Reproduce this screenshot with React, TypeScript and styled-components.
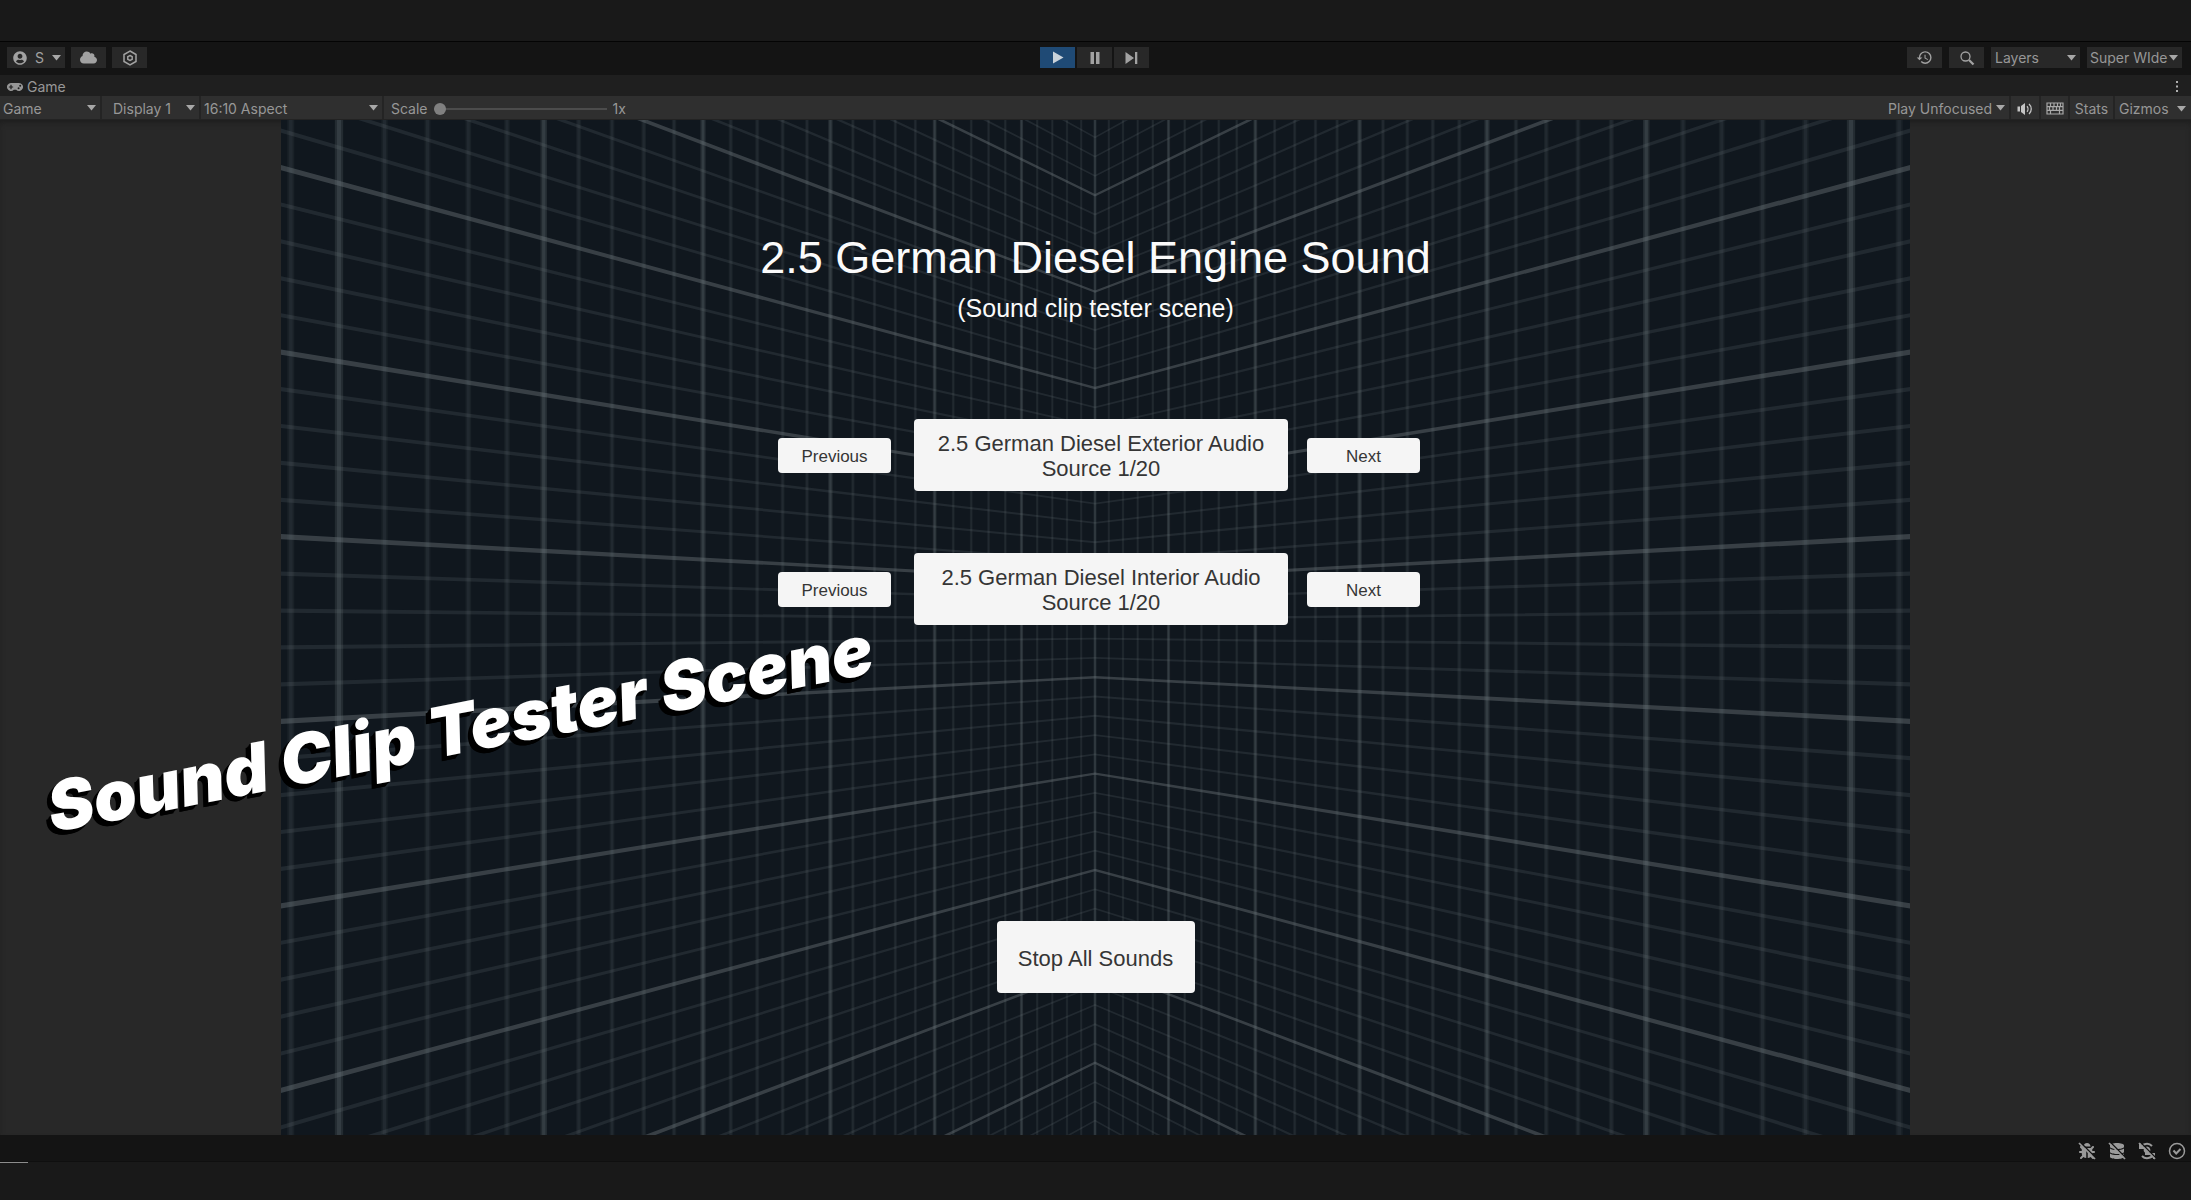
import React from 'react';
import styled, { createGlobalStyle } from 'styled-components';
import { FaBug, FaCloud, FaDatabase, FaGamepad, FaUserCircle } from 'react-icons/fa';
import { MdHistory } from 'react-icons/md';

const UI_FONT = 'Inter, "Liberation Sans", sans-serif';
const SCENE_FONT = '"Liberation Sans", Arial, sans-serif';

const GlobalStyle = createGlobalStyle`
  *, *::before, *::after { box-sizing: border-box; }
  body { margin: 0; background: #191919; }
  button, select, input { font: inherit; color: inherit; margin: 0; border: 0; border-radius: 0; padding: 0; }
`;

const Editor = styled.div`
  display: flex;
  flex-direction: column;
  min-height: 100vh;
  font: 14px/20px ${UI_FONT};
  color: #979797;
  background: #191919;
  overflow: hidden;
`;

const TitleStrip = styled.header`
  height: 42px;
  border-bottom: 1px solid #040404;
`;

const MainToolbar = styled.nav`
  display: grid;
  grid-template-columns: 1fr auto 1fr;
  align-items: center;
  height: 33px;
  padding: 0 9px 2px 7px;
  background: #141414;
`;

const Group = styled.div<{ $gap: number; $end?: boolean }>`
  display: flex;
  align-items: center;
  gap: ${(p) => p.$gap}px;
  justify-content: ${(p) => (p.$end ? 'flex-end' : 'flex-start')};
`;

const ToolButton = styled.button<{ $active?: boolean; $wide?: boolean }>`
  display: flex;
  align-items: center;
  justify-content: ${(p) => (p.$wide ? 'space-between' : 'center')};
  width: ${(p) => (p.$wide ? 58 : 35)}px;
  height: 21px;
  padding: ${(p) => (p.$wide ? '0 4px 0 6px' : '0')};
  color: ${(p) => (p.$active ? '#c9d2da' : '#a2a2a2')};
  background: ${(p) => (p.$active ? '#1f4a75' : '#282828')};
`;

const TabRow = styled.div`
  display: flex;
  align-items: center;
  justify-content: space-between;
  height: 21px;
  padding: 2px 11px 0 7px;
  background: #1f1f1f;
`;

const Tab = styled.button`
  display: flex;
  align-items: center;
  gap: 4px;
  background: none;
`;

const MenuButton = styled.button`
  display: flex;
  background: none;
`;

const GameToolbar = styled.div`
  display: flex;
  justify-content: space-between;
  height: 24px;
  background: #2f2f2f;
  border-bottom: 1px solid #232323;
`;

const Strip = styled.div`
  display: flex;
`;

const SelectBox = styled.label<{ $width: number; $filled?: boolean }>`
  position: relative;
  display: flex;
  align-items: center;
  width: ${(p) => p.$width}px;
  height: ${(p) => (p.$filled ? '21px' : '100%')};
  padding-top: ${(p) => (p.$filled ? 0 : 2)}px;
  background: ${(p) => (p.$filled ? '#282828' : 'transparent')};
  border-right: ${(p) => (p.$filled ? '0' : '2px solid #242424')};
`;

const Select = styled.select<{ $pad: number }>`
  appearance: none;
  width: 100%;
  height: 100%;
  padding-left: ${(p) => p.$pad}px;
  background: transparent;
`;

const CaretSlot = styled.span`
  position: absolute;
  right: 4px;
  top: 0;
  bottom: 0;
  display: flex;
  align-items: center;
  pointer-events: none;
`;

const Cell = styled.button<{ $width: number }>`
  display: flex;
  align-items: center;
  justify-content: center;
  width: ${(p) => p.$width}px;
  padding-top: 2px;
  background: none;
  border-right: 2px solid #242424;
`;

const GizmosButton = styled.button`
  display: flex;
  align-items: center;
  justify-content: space-between;
  width: 76px;
  padding: 2px 5px 0 4px;
  background: none;
`;

const ScaleLabel = styled.label`
  display: flex;
  align-items: center;
  gap: 6px;
  padding: 2px 0 0 7px;
`;

const ScaleSlider = styled.input`
  appearance: none;
  width: 173px;
  height: 12px;
  background: linear-gradient(#4c4c4c, #4c4c4c) center / 100% 2px no-repeat;
  &::-webkit-slider-thumb {
    appearance: none;
    width: 12px;
    height: 12px;
    border-radius: 50%;
    background: #808080;
  }
`;

const Viewport = styled.main`
  position: relative;
  flex: 1;
  display: flex;
  justify-content: center;
  background: #282828;
  box-shadow: inset 0 4px 6px -2px #1c1c1c;
`;

const Stage = styled.section`
  position: relative;
  display: flex;
  flex-direction: column;
  align-items: center;
  aspect-ratio: 1629 / 1015;
  height: 100%;
  min-height: 1015px;
  padding: 111px 0 142px;
  font-family: ${SCENE_FONT};
  color: #fbfbfb;
  background: #10171e;
`;

const Backdrop = styled.svg`
  position: absolute;
  inset: 0;
  width: 100%;
  height: 100%;
`;

const Title = styled.h1`
  position: relative;
  margin: 0 0 8px;
  font-size: 45px;
  line-height: 54px;
  font-weight: 400;
`;

const Subtitle = styled.p`
  position: relative;
  margin: 0 0 96px;
  font-size: 25px;
  line-height: 30px;
`;

const Rows = styled.div`
  position: relative;
  display: flex;
  flex-direction: column;
  gap: 62px;
  padding-left: 7px;
  margin-bottom: auto;
`;

const Row = styled.div`
  display: flex;
  align-items: center;
  gap: 19px;
`;

const SceneButton = styled.button<{ $size: 'small' | 'clip' | 'stop' }>`
  position: relative;
  width: ${(p) => ({ small: 113, clip: 374, stop: 198 })[p.$size]}px;
  height: ${(p) => (p.$size === 'small' ? 35 : 72)}px;
  margin-left: ${(p) => (p.$size === 'clip' ? 4 : 0)}px;
  padding: ${(p) => (p.$size === 'small' ? '2px 0 0' : '2px 16px 0')};
  font-family: ${SCENE_FONT};
  font-size: ${(p) => (p.$size === 'small' ? 17 : 22)}px;
  line-height: 25px;
  color: #353535;
  background: #f5f5f5;
  border-radius: 4px;
`;

const Caption = styled.p`
  position: absolute;
  left: 48px;
  top: 650px;
  margin: 0;
  font: italic 900 69px/76px Inter, sans-serif;
  white-space: nowrap;
  color: #fff;
  transform: rotate(-11deg);
  transform-origin: left center;
  text-shadow: -1px 1px #000, -2px 1px #000, -3px 2px #000, -4px 3px #000, -5px 4px #000, -6px 4px #000;
  pointer-events: none;
`;

const StatusBar = styled.footer`
  display: flex;
  justify-content: flex-end;
  align-items: center;
  gap: 12px;
  height: 27px;
  padding: 6px 5px 0 0;
  color: #9a9a9a;
  background: #141414;
  border-bottom: 1px solid #0f0f0f;
`;

const StatusButton = styled.button`
  display: flex;
  color: inherit;
  background: none;
`;

const BottomStrip = styled.div`
  height: 38px;
`;

const Progress = styled.div`
  width: 28px;
  height: 1px;
  background: #8c8c8c;
`;

const Caret = () => (
  <svg width="9" height="6" viewBox="0 0 9 6" aria-hidden="true">
    <path d="M0 0h9L4.500 5.500z" fill="#a8a8a8" />
  </svg>
);

type DropProps = { label: string; value: string; width: number; pad: number; filled?: boolean };

const Drop = ({ label, value, width, pad, filled }: DropProps) => (
  <SelectBox $width={width} $filled={filled}>
    <Select $pad={pad} aria-label={label} defaultValue={value}>
      <option>{value}</option>
    </Select>
    <CaretSlot><Caret /></CaretSlot>
  </SelectBox>
);

/* Two walls meeting at the middle of the stage. Columns close up towards the
   corner, rows fan out from the horizon. */
const CX = 814;
const CY = 509;
const DEPTH = 13;
const SPREAD = 882;
const ROW = 19.28;
const LINE = '#6a7578';

function Grid() {
  const shapes: React.ReactNode[] = [];
  for (let i = -31; i <= 31; i++) {
    const n = Math.abs(i) / 5;
    const x = CX + Math.sign(i) * ((SPREAD * n) / (DEPTH - n));
    const near = DEPTH / (DEPTH - n);
    const major = i % 5 === 0;
    const w = (major ? 3 : 2.3) * near * near * 0.75 + 0.6;
    shapes.push(
      <g key={`c${i}`} fill={LINE} opacity={major ? 0.48 : 0.24}>
        <rect x={x - w / 2} y="0" width={w} height="1015" opacity="0.45" />
        <rect x={x - w / 4} y="0" width={w / 2} height="1015" opacity="0.7" />
      </g>,
    );
  }
  const edge = 1 + CX / 890;
  for (let j = -27; j <= 26; j++) {
    const o = (j + 0.5) * ROW;
    const major = (((j - 2) % 5) + 5) % 5 === 0;
    const a = major ? 1.2 : 0.9;
    const b = major ? 2.6 : 2.1;
    const y0 = CY + o;
    const y1 = CY + o * edge;
    shapes.push(
      <path
        key={`r${j}`}
        fill={LINE}
        opacity={major ? 0.44 : 0.2}
        d={`M0 ${y1 - b}L${CX} ${y0 - a}L${CX * 2 + 1} ${y1 - b}V${y1 + b}L${CX} ${y0 + a}L0 ${y1 + b}z`}
      />,
    );
  }
  return (
    <Backdrop viewBox="0 0 1629 1015" preserveAspectRatio="none" aria-hidden="true">
      {shapes}
    </Backdrop>
  );
}

const Slash = () => (
  <>
    <path d="M2.500 0.500l15 15" stroke="#141414" strokeWidth="1.500" />
    <path d="M1 1l16 16" stroke="currentColor" strokeWidth="1.700" />
  </>
);

const clips = ['2.5 German Diesel Exterior Audio Source 1/20', '2.5 German Diesel Interior Audio Source 1/20'];

export default function App() {
  return (
    <Editor>
      <GlobalStyle />
      <TitleStrip />
      <MainToolbar>
        <Group $gap={6}>
          <ToolButton $wide aria-label="Account">
            <FaUserCircle size={14} />
            <span>S</span>
            <Caret />
          </ToolButton>
          <ToolButton aria-label="Cloud"><FaCloud size={17} /></ToolButton>
          <ToolButton aria-label="Package">
            <svg width="16" height="16" viewBox="0 0 16 16" fill="none" stroke="currentColor" strokeWidth="1.5">
              <path d="M8 1l6 3.500v7L8 15l-6-3.500v-7z" />
              <path d="M8 5.500l2.200 1.200v2.600L8 10.500 5.800 9.300V6.700z" />
            </svg>
          </ToolButton>
        </Group>
        <Group $gap={2}>
          <ToolButton $active aria-label="Play">
            <svg width="12" height="13" viewBox="0 0 12 13" fill="currentColor"><path d="M1 0.500l10.500 6L1 12.500z" /></svg>
          </ToolButton>
          <ToolButton aria-label="Pause">
            <svg width="10" height="12" viewBox="0 0 10 12" fill="currentColor"><path d="M0.500 0h3.500v12H0.500zM6 0h3.500v12H6z" /></svg>
          </ToolButton>
          <ToolButton aria-label="Step">
            <svg width="13" height="12" viewBox="0 0 13 12" fill="currentColor"><path d="M0.500 0l8.500 6-8.500 6zM10 0h2.300v12H10z" /></svg>
          </ToolButton>
        </Group>
        <Group $gap={7} $end>
          <ToolButton aria-label="History"><MdHistory size={17} /></ToolButton>
          <ToolButton aria-label="Search">
            <svg width="16" height="16" viewBox="0 0 16 16" fill="none" stroke="currentColor">
              <circle cx="6.500" cy="6.500" r="4.500" strokeWidth="1.300" />
              <path d="M10 10l4.500 4.500" strokeWidth="2.300" />
            </svg>
          </ToolButton>
          <Drop filled label="Layers" value="Layers" width={89} pad={4} />
          <Drop filled label="Layout" value="Super WIde" width={95} pad={3} />
        </Group>
      </MainToolbar>
      <TabRow>
        <Tab><FaGamepad size={16} /><span>Game</span></Tab>
        <MenuButton aria-label="Tab menu">
          <svg width="6" height="14" viewBox="0 0 6 14" fill="#b0b0b0"><path d="M2 1h2v2H2zM2 5.500h2v2H2zM2 10h2v2H2z" /></svg>
        </MenuButton>
      </TabRow>
      <GameToolbar>
        <Strip>
          <Drop label="View" value="Game" width={102} pad={3} />
          <Drop label="Display" value="Display 1" width={99} pad={11} />
          <Drop label="Aspect" value="16:10 Aspect" width={183} pad={3} />
          <ScaleLabel>
            <span>Scale</span>
            <ScaleSlider type="range" min="1" max="5" defaultValue="1" />
            <span>1x</span>
          </ScaleLabel>
        </Strip>
        <Strip>
          <Drop label="Play mode" value="Play Unfocused" width={126} pad={3} />
          <Cell $width={30} aria-label="Mute audio">
            <svg width="16" height="14" viewBox="0 0 16 14" fill="none" stroke="#c4c4c4" strokeWidth="1.300">
              <path d="M0.500 4.500H3v5H0.500zM4 4l4-3v12l-4-3z" fill="#c4c4c4" stroke="none" />
              <path d="M10 4.200c1.300 1.500 1.300 4.100 0 5.600M12 2c3 2.700 3 7.300 0 10" />
            </svg>
          </Cell>
          <Cell $width={29} aria-label="Shortcuts">
            <svg width="18" height="13" viewBox="0 0 18 13" fill="none" stroke="#a8a8a8" strokeWidth="1.200">
              <path d="M1 1h16v11H1zM1 4.700h16M1 8.300h16M4.500 1v3.700M8 1v3.700M11.500 1v3.700M14.500 1v3.700M3.500 4.700v3.600M7 4.700v3.600M10.500 4.700v3.600M13.500 4.700v3.600M4.500 8.300V12M13.500 8.300V12" />
            </svg>
          </Cell>
          <Cell $width={45}>Stats</Cell>
          <GizmosButton><span>Gizmos</span><Caret /></GizmosButton>
        </Strip>
      </GameToolbar>
      <Viewport>
        <Stage>
          <Grid />
          <Title>2.5 German Diesel Engine Sound</Title>
          <Subtitle>(Sound clip tester scene)</Subtitle>
          <Rows>
            {clips.map((clip) => (
              <Row key={clip}>
                <SceneButton $size="small">Previous</SceneButton>
                <SceneButton $size="clip">{clip}</SceneButton>
                <SceneButton $size="small">Next</SceneButton>
              </Row>
            ))}
          </Rows>
          <SceneButton $size="stop">Stop All Sounds</SceneButton>
        </Stage>
        <Caption>Sound Clip Tester Scene</Caption>
      </Viewport>
      <StatusBar>
        <StatusButton aria-label="Debugger">
          <svg width="18" height="18" viewBox="0 0 18 18"><FaBug x="1" y="1" size={16} /><Slash /></svg>
        </StatusButton>
        <StatusButton aria-label="Cache server">
          <svg width="18" height="18" viewBox="0 0 18 18"><FaDatabase x="1" y="1" size={16} /><Slash /></svg>
        </StatusButton>
        <StatusButton aria-label="Auto lighting">
          <svg width="18" height="18" viewBox="0 0 18 18" fill="none" stroke="currentColor" strokeWidth="2">
            <path d="M15.500 12A7 7 0 0 1 4 14M2.500 6A7 7 0 0 1 14 4M2 1v5h5M16 17v-5h-5" />
            <path d="M9 4.500a3.500 3.500 0 0 1 2 6.300V13H7v-2.200a3.500 3.500 0 0 1 2-6.300z" fill="currentColor" stroke="none" />
            <Slash />
          </svg>
        </StatusButton>
        <StatusButton aria-label="Activity">
          <svg width="18" height="18" viewBox="0 0 18 18" fill="none" stroke="currentColor" strokeWidth="1.500">
            <circle cx="9" cy="9" r="7.500" />
            <path d="M5.500 8.500l2.700 3L12.500 7" strokeWidth="2" />
          </svg>
        </StatusButton>
      </StatusBar>
      <BottomStrip><Progress /></BottomStrip>
    </Editor>
  );
}
